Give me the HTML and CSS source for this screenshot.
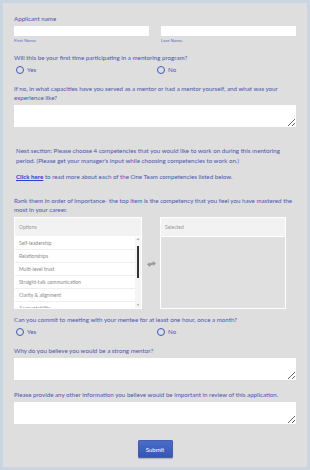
FILE: index.html
```html
<!DOCTYPE html>
<html lang="en">
<head>
<meta charset="UTF-8">
<meta name="viewport" content="width=device-width, initial-scale=1.0">
<title>Mentor Application</title>
<link rel="stylesheet" href="styles.css">
</head>
<body>
<form class="form">
  <div class="field name-field">
    <label class="label">Applicant name</label>
    <div class="name-row">
      <div class="name-col">
        <input class="text-input" type="text">
        <span class="sublabel">First Name</span>
      </div>
      <div class="name-col">
        <input class="text-input" type="text">
        <span class="sublabel">Last Name</span>
      </div>
    </div>
  </div>

  <div class="field">
    <label class="label">Will this be your first time participating in a mentoring program?</label>
    <div class="radio-row">
      <label class="radio"><span class="radio-dot"></span>Yes</label>
      <label class="radio"><span class="radio-dot"></span>No</label>
    </div>
  </div>

  <div class="field">
    <label class="label">If no, in what capacities have you served as a mentor or had a mentor yourself, and what was your experience like?</label>
    <textarea class="text-area"></textarea>
  </div>

  <div class="note">
    <p>Next section: Please choose 4 competencies that you would like to work on during this mentoring period. (Please get your manager's input while choosing competencies to work on.)</p>
    <p><a href="#">Click here</a> to read more about each of the One Team competencies listed below.</p>
  </div>

  <div class="field rank-field">
    <label class="label">Rank them in order of importance- the top item is the competency that you feel you have mastered the most in your career.</label>
    <div class="rank">
      <div class="list-box">
        <div class="list-head">Options</div>
        <div class="list-body">
          <ul class="list-items">
            <li>Self-leadership</li>
            <li>Relationships</li>
            <li>Multi-level trust</li>
            <li>Straight-talk communication</li>
            <li>Clarity &amp; alignment</li>
            <li>Accountability</li>
          </ul>
          <div class="scrollbar">
            <span class="scroll-arrow">&#9650;</span>
            <span class="scroll-thumb"></span>
            <span class="scroll-arrow">&#9660;</span>
          </div>
        </div>
      </div>
      <div class="swap">
        <svg width="9" height="6" viewBox="0 0 9 6"><path d="M0 3.5 L2.5 1 L2.5 2.5 L6 1.2 L6 0 L9 2.5 L6.5 5 L6.5 3.5 L3 4.8 L3 6 Z" fill="#9a9a9a"/></svg>
      </div>
      <div class="list-box selected">
        <div class="list-head">Selected</div>
        <div class="list-empty"></div>
      </div>
    </div>
  </div>

  <div class="field">
    <label class="label">Can you commit to meeting with your mentee for at least one hour, once a month?</label>
    <div class="radio-row">
      <label class="radio"><span class="radio-dot"></span>Yes</label>
      <label class="radio"><span class="radio-dot"></span>No</label>
    </div>
  </div>

  <div class="field">
    <label class="label">Why do you believe you would be a strong mentor?</label>
    <textarea class="text-area"></textarea>
  </div>

  <div class="field">
    <label class="label">Please provide any other information you believe would be important in review of this application.</label>
    <textarea class="text-area"></textarea>
  </div>

  <div class="actions">
    <button class="submit" type="button">Submit</button>
  </div>
</form>
</body>
</html>
```

FILE: styles.css
```css
html, body {
  margin: 0;
  height: 100%;
}
body {
  background: #c9d5e1;
  padding: 3px;
  box-sizing: border-box;
  font-family: Lato, "Noto Sans", sans-serif;
  color: #4a55b0;
}
.form {
  background: #dedede;
  height: 100%;
  box-sizing: border-box;
  padding: 11px 11px 0 11px;
}
.label {
  display: block;
  font-size: 6.2px;
  line-height: 9px;
}
.field {
  margin-bottom: 10px;
}
.name-field {
  margin-bottom: 9px;
}
.rank-field {
  margin-bottom: 6px;
}

/* name */
.name-row {
  display: flex;
  gap: 12px;
  margin-top: 3px;
}
.name-col {
  flex: 1;
  min-width: 0;
  display: flex;
  flex-direction: column;
}
.text-input {
  width: 100%;
  box-sizing: border-box;
  height: 10px;
  border: none;
  background: #fff;
  padding: 0;
  margin: 0;
}
.sublabel {
  font-size: 4.6px;
  line-height: 7px;
  color: #5b6bc3;
  margin-top: 1px;
}

/* radios */
.radio-row {
  display: flex;
  margin-top: 3px;
}
.radio {
  flex: 1;
  display: flex;
  align-items: center;
  gap: 3px;
  font-size: 6.2px;
  line-height: 9px;
  padding-left: 2px;
}
.radio-dot {
  width: 6px;
  height: 6px;
  border: 1.3px solid #3a5cb3;
  border-radius: 50%;
}

/* textarea */
.text-area {
  display: block;
  width: 100%;
  height: 22px;
  box-sizing: border-box;
  margin-top: 3px;
  border: none;
  background: #fff;
  resize: vertical;
}

/* info note */
.note {
  padding: 9px 2px 8px;
  font-size: 6.2px;
  line-height: 10px;
}
.note p {
  margin: 0 0 6px;
}
.note a {
  color: #2e3fd6;
  font-weight: bold;
}

/* rank lists */
.rank {
  display: flex;
  align-items: flex-start;
  margin-top: 3px;
}
.list-box {
  width: 126px;
  border: 1px solid #fff;
  background: #fff;
}
.list-head {
  background: #f2f2f2;
  color: #999;
  font-size: 5px;
  height: 18px;
  line-height: 18px;
  padding-left: 4px;
  border-bottom: 1px solid #fff;
}
.list-body {
  display: flex;
  height: 71px;
  overflow: hidden;
}
.list-items {
  flex: 1;
  margin: 0;
  padding: 0;
  list-style: none;
}
.list-items li {
  font-size: 5px;
  color: #888;
  height: 12px;
  line-height: 12px;
  padding-left: 4px;
  border-bottom: 1px solid #eee;
}
.scrollbar {
  width: 6px;
  display: flex;
  flex-direction: column;
  align-items: center;
  background: #f4f4f4;
}
.scroll-arrow {
  font-size: 3px;
  line-height: 5px;
  color: #888;
}
.scroll-thumb {
  width: 2px;
  height: 32px;
  background: #333;
  margin: 4px 0 auto;
}
.swap {
  width: 18px;
  display: flex;
  justify-content: center;
  padding-top: 44px;
}
.selected {
  width: 124px;
  background: #e0e0e0;
}
.list-empty {
  height: 71px;
}

/* submit */
.actions {
  display: flex;
  justify-content: center;
  padding-top: 6px;
}
.submit {
  width: 35px;
  height: 18px;
  padding: 0;
  border: 1px solid #4660b0;
  border-radius: 1px;
  background: linear-gradient(#4a6cc9, #3556b5);
  color: #fff;
  font-family: Lato, "Noto Sans", sans-serif;
  font-size: 6px;
  box-shadow: 0 1px 1px rgba(0, 0, 0, 0.2);
}
```
